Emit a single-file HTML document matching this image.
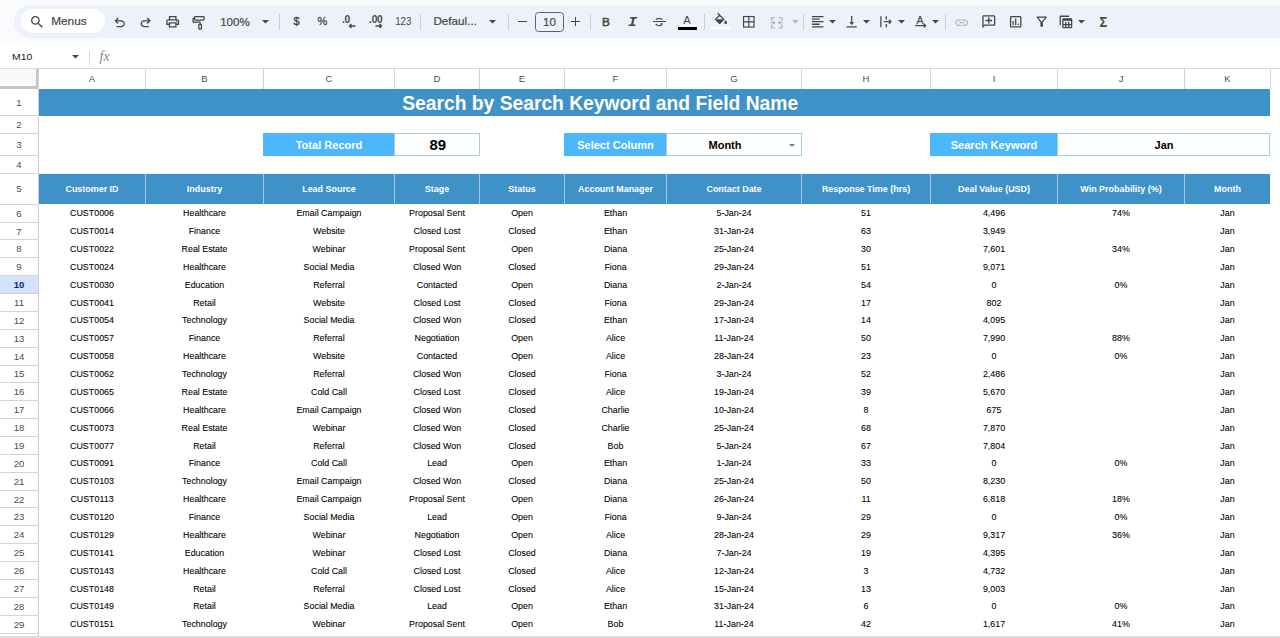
<!DOCTYPE html><html><head><meta charset="utf-8"><title>Search</title><style>html,body{margin:0;padding:0}
body{width:1280px;height:638px;overflow:hidden;position:relative;background:#fff;font-family:"Liberation Sans",sans-serif;}
body>div{position:absolute;box-sizing:border-box}
.topbg{left:0;top:0;width:1280px;height:44px;background:#f9fbfd}
.tb{left:13.5px;top:5.3px;width:1280px;height:32.4px;background:#edf2fa;border-radius:16.3px 0 0 16.3px}
.pill{left:20.8px;top:9.4px;width:84.2px;height:24px;border-radius:12px;background:#fff}
.fbar{left:0;top:44px;width:1280px;height:24.5px;background:#fff}
.ic{position:absolute;display:block;overflow:visible}
.sep{width:1px;background:#cbced4}
.tt{text-align:center;white-space:nowrap}
.fsbox{left:535px;top:12px;width:28.6px;height:19.6px;border:1px solid #60646a;border-radius:3.5px}

.colstrip{background:#fff;border-top:1px solid #d9d9d9;}
.corner{background:#f8f9fb;border-right:3px solid #c4c6c8;border-bottom:3px solid #c4c6c8;border-top:1px solid #d9d9d9}
.ch{border-left:1px solid #d4d4d4;font-size:9.5px;color:#4a4d51;text-align:center;line-height:19.4px}
.rh{font-size:9.6px;color:#4a4d51;text-align:center;display:flex;align-items:center;justify-content:center}
.rh.sel{color:#0b2a5c;font-weight:bold}
.selbg{background:#d3e3fd}
.rhbg{background:#fff}
.rline{background:#d4d4d4}
.rvline{background:#cfcfcf}
.band{background:#3e92c8}
.title{color:#fff;font-weight:bold;font-size:19.25px;display:flex;align-items:center;justify-content:center;white-space:nowrap}
.title span,.lab span,.val span{display:inline-block;position:relative;transform:scaleY(1.02)}
.lab{background:#4cb7fa;color:#fff;font-weight:bold;font-size:11.05px;display:flex;align-items:center;justify-content:center}
.val{background:#fff;border:1px solid #a6cde3;color:#000;font-weight:bold;font-size:11px;display:flex;align-items:center;justify-content:center}
.val.big{font-size:14.9px}
.dd{position:absolute;right:6.2px;top:9.5px;width:0;height:0;border-left:3.4px solid transparent;border-right:3.4px solid transparent;border-top:3.6px solid #7a7a7a}
.hd{transform:scaleY(1.02);color:#fff;font-weight:bold;font-size:8.95px;display:flex;align-items:center;justify-content:center;white-space:nowrap}
.hsep{background:#a9c9ea}
.c{transform:scaleY(1.02);font-size:8.9px;color:#000;-webkit-text-stroke:0.08px #000;display:flex;align-items:center;justify-content:center;white-space:nowrap}
.botline{background:#dcdcdc}
</style></head><body>
<div class="topbg"></div><div class="tb"></div><div class="pill"></div><div class="fbar"></div>
<svg class="ic" style="left:28.50px;top:13.80px" width="16.20" height="16.20" viewBox="0 0 24 24" preserveAspectRatio="none" fill="#444746"><g><path d="M15.5 14h-.79l-.28-.27C15.41 12.59 16 11.11 16 9.5 16 5.91 13.09 3 9.5 3S3 5.91 3 9.5 5.91 16 9.5 16c1.61 0 3.09-.59 4.23-1.57l.27.28v.79l5 4.99L20.49 19l-4.99-5zm-6 0C7.01 14 5 11.99 5 9.5S7.01 5 9.5 5 14 7.01 14 9.5 11.99 14 9.5 14z"/></g></svg>
<div class="tt" style="left:51.2px;top:11.1px;width:40px;height:20px;line-height:20px;font-size:11.8px;color:#444746;text-align:left;-webkit-text-stroke:0.2px #444746">Menus</div>
<svg class="ic" style="left:111.80px;top:14.90px" width="15.40" height="15.40" viewBox="0 0 24 24" preserveAspectRatio="none" fill="#444746"><g><path d="M7 19v-2h7.1q1.575 0 2.738-1T18 13.5q0-1.500-1.163-2.500T14.100 10H7.800l2.600 2.600L9 14 4 9l5-5 1.400 1.400L7.800 8H14.100q2.425 0 4.163 1.575T20 13.500q0 2.350-1.738 3.925T14.100 19Z"/></g></svg>
<svg class="ic" style="left:138.10px;top:14.90px" width="15.40" height="15.40" viewBox="0 0 24 24" preserveAspectRatio="none" fill="#444746"><g transform="translate(24,0) scale(-1,1)"><path d="M7 19v-2h7.1q1.575 0 2.738-1T18 13.5q0-1.500-1.163-2.500T14.100 10H7.800l2.600 2.600L9 14 4 9l5-5 1.400 1.400L7.800 8H14.100q2.425 0 4.163 1.575T20 13.500q0 2.350-1.738 3.925T14.100 19Z"/></g></svg>
<svg class="ic" style="left:165.10px;top:14.30px" width="15.40" height="15.40" viewBox="0 0 24 24" preserveAspectRatio="none" fill="#444746"><g><path d="M16 8V5H8v3H6V3h12v5ZM18 12.500q.425 0 .713-.288T19 11.500q0-.425-.288-.713T18 10.500q-.425 0-.713.288T17 11.500q0 .425.288.713T18 12.500ZM16 19v-4H8v4Zm2 2H6v-4H2v-6q0-1.275.875-2.138T5 8h14q1.275 0 2.138.863T22 11v6h-4Zm2-6v-4q0-.425-.288-.713T19 10H5q-.425 0-.713.288T4 11v4h2v-2h12v2Z"/></g></svg>
<svg class="ic" style="left:190.50px;top:14.90px" width="15.40" height="15.40" viewBox="0 0 24 24" preserveAspectRatio="none" fill="none"><g><g stroke="#444746" stroke-width="2" fill="none" stroke-linejoin="round"><rect x="5.500" y="2.500" width="15" height="5.500" rx="1.200"/><path d="M5.500 5.200H3.200v5.800h11v3.500"/><rect x="12.200" y="14.500" width="4" height="7.500" rx="1"/></g></g></svg>
<div class="tt" style="left:210.0px;width:50.0px;top:11.6px;height:20px;line-height:20px;font-size:11.6px;font-weight:normal;color:#444746;-webkit-text-stroke:0.2px #444746">100%</div>
<svg class="ic" style="left:261.70px;top:20.45px" width="7.0" height="3.5" viewBox="0 0 10 5" fill="#444746"><path d="M0 0h10L5 5z"/></svg>
<div class="sep" style="left:279.0px;top:13.5px;height:16.5px"></div>
<div class="tt" style="left:283.5px;width:26.0px;top:11.0px;height:20px;line-height:20px;font-size:11.0px;font-weight:normal;color:#444746;-webkit-text-stroke:0.35px #444746">$</div>
<div class="tt" style="left:308.0px;width:29.0px;top:11.2px;height:20px;line-height:20px;font-size:11.0px;font-weight:normal;color:#444746;-webkit-text-stroke:0.3px #444746">%</div>
<div class="tt" style="left:331.0px;width:30.0px;top:9.9px;height:20px;line-height:20px;font-size:10.2px;font-weight:bold;color:#444746;letter-spacing:-0.3px">.0</div>
<svg class="ic" style="left:348.30px;top:22.20px" width="8.00" height="8.00" viewBox="0 0 16 16" preserveAspectRatio="none" fill="none"><g><path d="M15 8H3M7 4L3 8l4 4" stroke="#444746" stroke-width="2.700" fill="none"/></g></svg>
<div class="tt" style="left:359.0px;width:33.5px;top:9.9px;height:20px;line-height:20px;font-size:10.2px;font-weight:bold;color:#444746;letter-spacing:-0.3px">.00</div>
<svg class="ic" style="left:374.80px;top:22.20px" width="8.00" height="8.00" viewBox="0 0 16 16" preserveAspectRatio="none" fill="none"><g><path d="M1 8h12M9 4l4 4-4 4" stroke="#444746" stroke-width="2.700" fill="none"/></g></svg>
<div class="tt" style="left:386.0px;width:34.5px;top:10.6px;height:20px;line-height:20px;font-size:11.0px;font-weight:normal;color:#444746;transform:scaleX(0.88)">123</div>
<div class="sep" style="left:419.5px;top:13.5px;height:16.5px"></div>
<div class="tt" style="left:433.4px;top:11px;width:60px;height:20px;line-height:20px;font-size:11.7px;color:#444746;text-align:left;-webkit-text-stroke:0.2px #444746">Defaul...</div>
<svg class="ic" style="left:489.00px;top:20.45px" width="7.0" height="3.5" viewBox="0 0 10 5" fill="#444746"><path d="M0 0h10L5 5z"/></svg>
<div class="sep" style="left:508.0px;top:13.5px;height:16.5px"></div>
<div class="bar" style="left:518px;top:20.7px;width:8.600px;height:1.400px;background:#444746"></div>
<div class="fsbox"></div>
<div class="tt" style="left:530.0px;width:39.0px;top:11.8px;height:20px;line-height:20px;font-size:11.6px;font-weight:normal;color:#444746;-webkit-text-stroke:0.2px #444746">10</div>
<div class="bar" style="left:571.400px;top:20.7px;width:8.800px;height:1.400px;background:#444746"></div>
<div class="bar" style="left:575.100px;top:17px;width:1.400px;height:8.800px;background:#444746"></div>
<div class="sep" style="left:590.0px;top:13.5px;height:16.5px"></div>
<div class="tt" style="left:592.0px;width:28.0px;top:11.6px;height:20px;line-height:20px;font-size:11.8px;font-weight:normal;color:#444746;-webkit-text-stroke:0.5px #444746">B</div>
<div class="tt" style="left:618.0px;width:29.0px;top:12.8px;height:20px;line-height:20px;font-size:13.2px;font-weight:bold;color:#444746;font-style:italic;font-family:'Liberation Mono',monospace;transform:scaleX(1.15)">I</div>
<div class="tt" style="left:644.0px;width:30.0px;top:11.6px;height:20px;line-height:20px;font-size:11.8px;font-weight:normal;color:#444746;-webkit-text-stroke:0.35px #444746">S</div>
<div class="bar" style="left:652.500px;top:21.200px;width:13.500px;height:1.300px;background:#444746;box-shadow:0 -1px 0 #edf2fa,0 1px 0 #edf2fa"></div>
<div class="tt" style="left:672.0px;width:30.0px;top:10.1px;height:20px;line-height:20px;font-size:11.2px;font-weight:normal;color:#444746;">A</div>
<div class="bar" style="left:677.500px;top:26.800px;width:19px;height:2.800px;background:#000"></div>
<div class="sep" style="left:704.0px;top:13.5px;height:16.5px"></div>
<svg class="ic" style="left:712.60px;top:12.30px" width="16.00" height="16.00" viewBox="0 -1 24 24" preserveAspectRatio="none" fill="#444746"><g><path d="M16.56 8.94L7.62 0 6.21 1.41l2.38 2.38-5.15 5.15c-.59.59-.59 1.54 0 2.12l5.5 5.5c.29.29.68.44 1.06.44s.77-.15 1.06-.44l5.5-5.5c.59-.58.59-1.53 0-2.12zM5.21 10L10 5.21 14.79 10H5.21zM19 11.5s-2 2.170-2 3.500c0 1.100.900 2 2 2s2-.900 2-2c0-1.330-2-3.500-2-3.500z"/></g></svg>
<div class="bar" style="left:711px;top:26.600px;width:19px;height:2.900px;background:#fff"></div>
<svg class="ic" style="left:741.20px;top:14.10px" width="15.60" height="15.60" viewBox="0 0 24 24" preserveAspectRatio="none" fill="none"><g><g stroke="#444746" stroke-width="1.800" fill="none"><rect x="3.900" y="3.900" width="16.200" height="16.200"/><path d="M12 4v16M4 12h16"/></g></g></svg>
<svg class="ic" style="left:769.10px;top:14.50px" width="15.40" height="15.40" viewBox="0 0 24 24" preserveAspectRatio="none" fill="none"><g><g stroke="#b4b7bb" stroke-width="2" fill="none"><path d="M9 4H4v5M4 15v5h5M15 4h5v5M20 15v5h-5"/><path d="M3 12h6M6.500 9.500L9 12l-2.500 2.500M21 12h-6M17.500 9.500L15 12l2.500 2.500"/></g></g></svg>
<svg class="ic" style="left:791.50px;top:20.45px" width="7.0" height="3.5" viewBox="0 0 10 5" fill="#b4b7bb"><path d="M0 0h10L5 5z"/></svg>
<div class="sep" style="left:802.5px;top:13.5px;height:16.5px"></div>
<svg class="ic" style="left:809.80px;top:14.30px" width="15.40" height="15.40" viewBox="0 0 24 24" preserveAspectRatio="none" fill="#444746"><g><path d="M15 15H3v2h12v-2zm0-8H3v2h12V7zM3 13h18v-2H3v2zm0 8h18v-2H3v2zM3 3v2h18V3H3z"/></g></svg>
<svg class="ic" style="left:829.20px;top:20.45px" width="7.0" height="3.5" viewBox="0 0 10 5" fill="#444746"><path d="M0 0h10L5 5z"/></svg>
<svg class="ic" style="left:844.00px;top:14.30px" width="15.40" height="15.40" viewBox="0 0 24 24" preserveAspectRatio="none" fill="#444746"><g><path d="M16 13h-3V3h-2v10H8l4 4 4-4zM4 19v2h16v-2H4z"/></g></svg>
<svg class="ic" style="left:863.20px;top:20.45px" width="7.0" height="3.5" viewBox="0 0 10 5" fill="#444746"><path d="M0 0h10L5 5z"/></svg>
<svg class="ic" style="left:877.80px;top:14.30px" width="15.40" height="15.40" viewBox="0 0 24 24" preserveAspectRatio="none" fill="none"><g><g stroke="#444746" stroke-width="2" fill="none"><path d="M4.500 3.500v17M13 3.500v5M13 15.500v5M9 12h11M17 8.700L20.300 12l-3.300 3.300"/></g></g></svg>
<svg class="ic" style="left:897.50px;top:20.45px" width="7.0" height="3.5" viewBox="0 0 10 5" fill="#444746"><path d="M0 0h10L5 5z"/></svg>
<div class="tt" style="left:905.0px;width:30.0px;top:9.5px;height:20px;line-height:20px;font-size:10.6px;font-weight:normal;color:#444746;-webkit-text-stroke:0.25px #444746">A</div>
<svg class="ic" style="left:914.70px;top:20.20px" width="11.40" height="11.40" viewBox="0 0 24 24" preserveAspectRatio="none" fill="none"><g><path d="M0.500 12h21M18.500 8l4 4-4 4" stroke="#444746" stroke-width="2.600" fill="none"/></g></svg>
<svg class="ic" style="left:932.00px;top:20.45px" width="7.0" height="3.5" viewBox="0 0 10 5" fill="#444746"><path d="M0 0h10L5 5z"/></svg>
<div class="sep" style="left:945.0px;top:13.5px;height:16.5px"></div>
<svg class="ic" style="left:953.70px;top:14.70px" width="15.40" height="15.40" viewBox="0 0 24 24" preserveAspectRatio="none" fill="#b4b7bb"><g><path d="M3.9 12c0-1.710 1.390-3.100 3.100-3.100h4V7H7c-2.760 0-5 2.240-5 5s2.240 5 5 5h4v-1.900H7c-1.710 0-3.100-1.390-3.100-3.100zM8 13h8v-2H8v2zm9-6h-4v1.900h4c1.710 0 3.100 1.390 3.100 3.100s-1.390 3.100-3.100 3.100h-4V17h4c2.760 0 5-2.240 5-5s-2.240-5-5-5z"/></g></svg>
<svg class="ic" style="left:980.80px;top:14.40px" width="15.60" height="15.60" viewBox="0 0 24 24" preserveAspectRatio="none" fill="#444746"><g transform="translate(24,0) scale(-1,1)"><path d="M22 4c0-1.100-.900-2-2-2H4c-1.100 0-2 .900-2 2v12c0 1.100.900 2 2 2h14l4 4V4zm-2 13.170L18.830 16H4V4h16v13.170zM13 5h-2v4H7v2h4v4h2v-4h4V9h-4z"/></g></svg>
<svg class="ic" style="left:1007.70px;top:14.30px" width="15.40" height="15.40" viewBox="0 0 24 24" preserveAspectRatio="none" fill="#444746"><g><path d="M9 17H7v-6h2v6zm4 0h-2V7h2v10zm4 0h-2v-2.200h2V17zm2 2H5V5h14v14zm0-16H5c-1.100 0-2 .900-2 2v14c0 1.100.900 2 2 2h14c1.100 0 2-.900 2-2V5c0-1.100-.900-2-2-2z"/></g></svg>
<svg class="ic" style="left:1033.70px;top:14.30px" width="15.40" height="15.40" viewBox="0 0 24 24" preserveAspectRatio="none" fill="#444746"><g><path d="M7 6h10l-5.010 6.300L7 6zm-2.750-.390C6.270 8.200 10 13 10 13v6c0 .550.450 1 1 1h2c.550 0 1-.450 1-1v-6s3.720-4.800 5.740-7.390c.510-.660.040-1.610-.790-1.610H5.040c-.830 0-1.300.950-.790 1.610z"/></g></svg>
<svg class="ic" style="left:1058.40px;top:14.00px" width="15.60" height="15.60" viewBox="0 0 24 24" preserveAspectRatio="none" fill="none"><g><g stroke="#444746" stroke-width="2" fill="none"><path d="M17 3.500H3.500v14"/><rect x="7.500" y="7.500" width="13.500" height="13.500" rx="1"/><path d="M7.500 9h13.500" stroke-width="3"/><path d="M7.500 16.400h13.500M12 12v9M16.500 12v9"/></g></g></svg>
<svg class="ic" style="left:1078.20px;top:20.45px" width="7.0" height="3.5" viewBox="0 0 10 5" fill="#444746"><path d="M0 0h10L5 5z"/></svg>
<div class="tt" style="left:1089.0px;width:29.0px;top:11.9px;height:20px;line-height:20px;font-size:14.4px;font-weight:bold;color:#444746;transform:scaleX(0.9)">Σ</div>
<div class="tt" style="left:12px;top:47.300px;width:40px;height:20px;line-height:20px;font-size:10.4px;color:#202124;text-align:left;transform:scaleY(0.94)">M10</div>
<svg class="ic" style="left:71.90px;top:55.45px" width="7.0" height="3.5" viewBox="0 0 10 5" fill="#444746"><path d="M0 0h10L5 5z"/></svg>
<div class="sep" style="left:88.700px;top:51px;height:13.500px;background:#d5d8dc"></div>
<div class="tt" style="left:99.6px;top:46.800px;width:18px;height:20px;line-height:20px;font-size:13.6px;color:#80868b;text-align:left;font-style:italic;font-family:'Liberation Serif',serif;letter-spacing:0.2px">fx</div>
<div class="colstrip" style="left:0.0px;top:68.0px;width:1280.0px;height:21.0px;"></div>
<div class="corner" style="left:0.0px;top:68.0px;width:39.0px;height:21.0px;"></div>
<div class="ch" style="left:38.0px;top:69.0px;width:107.0px;height:20.0px;">A</div>
<div class="ch" style="left:145.0px;top:69.0px;width:118.0px;height:20.0px;">B</div>
<div class="ch" style="left:263.0px;top:69.0px;width:131.0px;height:20.0px;">C</div>
<div class="ch" style="left:394.0px;top:69.0px;width:85.0px;height:20.0px;">D</div>
<div class="ch" style="left:479.0px;top:69.0px;width:85.0px;height:20.0px;">E</div>
<div class="ch" style="left:564.0px;top:69.0px;width:102.0px;height:20.0px;">F</div>
<div class="ch" style="left:666.0px;top:69.0px;width:135.0px;height:20.0px;">G</div>
<div class="ch" style="left:801.0px;top:69.0px;width:129.0px;height:20.0px;">H</div>
<div class="ch" style="left:930.0px;top:69.0px;width:127.0px;height:20.0px;">I</div>
<div class="ch" style="left:1057.0px;top:69.0px;width:127.0px;height:20.0px;">J</div>
<div class="ch" style="left:1184.0px;top:69.0px;width:86.0px;height:20.0px;">K</div>
<div class="ch" style="left:1270.0px;top:69.0px;width:10.0px;height:20.0px;"></div>
<div class="rhbg" style="left:0.0px;top:89.0px;width:39.0px;height:549.0px;"></div>
<div class="rh" style="left:0.0px;top:89.0px;width:38.0px;height:26.8px;">1</div>
<div class="rh" style="left:0.0px;top:115.8px;width:38.0px;height:17.8px;">2</div>
<div class="rline" style="left:0.0px;top:115.0px;width:38.0px;height:1.0px;"></div>
<div class="rh" style="left:0.0px;top:133.6px;width:38.0px;height:22.1px;">3</div>
<div class="rline" style="left:0.0px;top:133.0px;width:38.0px;height:1.0px;"></div>
<div class="rh" style="left:0.0px;top:155.7px;width:38.0px;height:18.1px;">4</div>
<div class="rline" style="left:0.0px;top:155.0px;width:38.0px;height:1.0px;"></div>
<div class="rh" style="left:0.0px;top:173.8px;width:38.0px;height:30.4px;">5</div>
<div class="rline" style="left:0.0px;top:173.0px;width:38.0px;height:1.0px;"></div>
<div class="rh" style="left:0.0px;top:204.2px;width:38.0px;height:17.9px;">6</div>
<div class="rline" style="left:0.0px;top:204.0px;width:38.0px;height:1.0px;"></div>
<div class="rh" style="left:0.0px;top:222.1px;width:38.0px;height:17.9px;">7</div>
<div class="rline" style="left:0.0px;top:222.0px;width:38.0px;height:1.0px;"></div>
<div class="rh" style="left:0.0px;top:239.9px;width:38.0px;height:17.9px;">8</div>
<div class="rline" style="left:0.0px;top:239.0px;width:38.0px;height:1.0px;"></div>
<div class="rh" style="left:0.0px;top:257.8px;width:38.0px;height:17.9px;">9</div>
<div class="rline" style="left:0.0px;top:257.0px;width:38.0px;height:1.0px;"></div>
<div class="selbg" style="left:0.0px;top:275.0px;width:38.0px;height:18.0px;"></div>
<div class="rh sel" style="left:0.0px;top:275.7px;width:38.0px;height:17.9px;">10</div>
<div class="rline" style="left:0.0px;top:275.0px;width:38.0px;height:1.0px;"></div>
<div class="rh" style="left:0.0px;top:293.6px;width:38.0px;height:17.9px;">11</div>
<div class="rline" style="left:0.0px;top:293.0px;width:38.0px;height:1.0px;"></div>
<div class="rh" style="left:0.0px;top:311.4px;width:38.0px;height:17.9px;">12</div>
<div class="rline" style="left:0.0px;top:311.0px;width:38.0px;height:1.0px;"></div>
<div class="rh" style="left:0.0px;top:329.3px;width:38.0px;height:17.9px;">13</div>
<div class="rline" style="left:0.0px;top:329.0px;width:38.0px;height:1.0px;"></div>
<div class="rh" style="left:0.0px;top:347.2px;width:38.0px;height:17.9px;">14</div>
<div class="rline" style="left:0.0px;top:347.0px;width:38.0px;height:1.0px;"></div>
<div class="rh" style="left:0.0px;top:365.0px;width:38.0px;height:17.9px;">15</div>
<div class="rline" style="left:0.0px;top:365.0px;width:38.0px;height:1.0px;"></div>
<div class="rh" style="left:0.0px;top:382.9px;width:38.0px;height:17.9px;">16</div>
<div class="rline" style="left:0.0px;top:382.0px;width:38.0px;height:1.0px;"></div>
<div class="rh" style="left:0.0px;top:400.8px;width:38.0px;height:17.9px;">17</div>
<div class="rline" style="left:0.0px;top:400.0px;width:38.0px;height:1.0px;"></div>
<div class="rh" style="left:0.0px;top:418.6px;width:38.0px;height:17.9px;">18</div>
<div class="rline" style="left:0.0px;top:418.0px;width:38.0px;height:1.0px;"></div>
<div class="rh" style="left:0.0px;top:436.5px;width:38.0px;height:17.9px;">19</div>
<div class="rline" style="left:0.0px;top:436.0px;width:38.0px;height:1.0px;"></div>
<div class="rh" style="left:0.0px;top:454.4px;width:38.0px;height:17.9px;">20</div>
<div class="rline" style="left:0.0px;top:454.0px;width:38.0px;height:1.0px;"></div>
<div class="rh" style="left:0.0px;top:472.2px;width:38.0px;height:17.9px;">21</div>
<div class="rline" style="left:0.0px;top:472.0px;width:38.0px;height:1.0px;"></div>
<div class="rh" style="left:0.0px;top:490.1px;width:38.0px;height:17.9px;">22</div>
<div class="rline" style="left:0.0px;top:490.0px;width:38.0px;height:1.0px;"></div>
<div class="rh" style="left:0.0px;top:508.0px;width:38.0px;height:17.9px;">23</div>
<div class="rline" style="left:0.0px;top:507.0px;width:38.0px;height:1.0px;"></div>
<div class="rh" style="left:0.0px;top:525.9px;width:38.0px;height:17.9px;">24</div>
<div class="rline" style="left:0.0px;top:525.0px;width:38.0px;height:1.0px;"></div>
<div class="rh" style="left:0.0px;top:543.7px;width:38.0px;height:17.9px;">25</div>
<div class="rline" style="left:0.0px;top:543.0px;width:38.0px;height:1.0px;"></div>
<div class="rh" style="left:0.0px;top:561.6px;width:38.0px;height:17.9px;">26</div>
<div class="rline" style="left:0.0px;top:561.0px;width:38.0px;height:1.0px;"></div>
<div class="rh" style="left:0.0px;top:579.5px;width:38.0px;height:17.9px;">27</div>
<div class="rline" style="left:0.0px;top:579.0px;width:38.0px;height:1.0px;"></div>
<div class="rh" style="left:0.0px;top:597.3px;width:38.0px;height:17.9px;">28</div>
<div class="rline" style="left:0.0px;top:597.0px;width:38.0px;height:1.0px;"></div>
<div class="rh" style="left:0.0px;top:615.2px;width:38.0px;height:17.9px;">29</div>
<div class="rline" style="left:0.0px;top:615.0px;width:38.0px;height:1.0px;"></div>
<div class="rh" style="left:0.0px;top:633.1px;width:38.0px;height:17.9px;">30</div>
<div class="rline" style="left:0.0px;top:633.0px;width:38.0px;height:1.0px;"></div>
<div class="rvline" style="left:38.0px;top:89.0px;width:1.0px;height:549.0px;"></div>
<div class="band" style="left:39.0px;top:89.0px;width:1231.0px;height:27.0px;"></div>
<div class="title" style="left:350.2px;top:90.6px;width:500.0px;height:26.7px;"><span>Search by Search Keyword and Field Name</span></div>
<div class="lab" style="left:263.0px;top:133.0px;width:132.0px;height:23.0px;"><span>Total Record</span></div>
<div class="val big" style="left:394.0px;top:133.0px;width:86.0px;height:23.0px;"><span style="left:0.7px;top:0.5px">89</span></div>
<div class="lab" style="left:564.0px;top:133.0px;width:103.0px;height:23.0px;"><span>Select Column</span></div>
<div class="val" style="left:666.0px;top:133.0px;width:136.0px;height:23.0px;"><span style="left:-9px">Month</span><i class="dd"></i></div>
<div class="lab" style="left:930.0px;top:133.0px;width:128.0px;height:23.0px;"><span>Search Keyword</span></div>
<div class="val" style="left:1057.0px;top:133.0px;width:213.0px;height:23.0px;"><span style="left:0.5px">Jan</span></div>
<div class="band" style="left:39.0px;top:174.0px;width:1231.0px;height:30.0px;"></div>
<div class="hd" style="left:39.0px;top:174.0px;width:106.0px;height:30.0px;">Customer ID</div>
<div class="hd" style="left:146.0px;top:174.0px;width:117.0px;height:30.0px;">Industry</div>
<div class="hsep" style="left:145.0px;top:174.0px;width:1.0px;height:30.0px;"></div>
<div class="hd" style="left:264.0px;top:174.0px;width:130.0px;height:30.0px;">Lead Source</div>
<div class="hsep" style="left:263.0px;top:174.0px;width:1.0px;height:30.0px;"></div>
<div class="hd" style="left:395.0px;top:174.0px;width:84.0px;height:30.0px;">Stage</div>
<div class="hsep" style="left:394.0px;top:174.0px;width:1.0px;height:30.0px;"></div>
<div class="hd" style="left:480.0px;top:174.0px;width:84.0px;height:30.0px;">Status</div>
<div class="hsep" style="left:479.0px;top:174.0px;width:1.0px;height:30.0px;"></div>
<div class="hd" style="left:565.0px;top:174.0px;width:101.0px;height:30.0px;">Account Manager</div>
<div class="hsep" style="left:564.0px;top:174.0px;width:1.0px;height:30.0px;"></div>
<div class="hd" style="left:667.0px;top:174.0px;width:134.0px;height:30.0px;">Contact Date</div>
<div class="hsep" style="left:666.0px;top:174.0px;width:1.0px;height:30.0px;"></div>
<div class="hd" style="left:802.0px;top:174.0px;width:128.0px;height:30.0px;">Response Time (hrs)</div>
<div class="hsep" style="left:801.0px;top:174.0px;width:1.0px;height:30.0px;"></div>
<div class="hd" style="left:931.0px;top:174.0px;width:126.0px;height:30.0px;">Deal Value (USD)</div>
<div class="hsep" style="left:930.0px;top:174.0px;width:1.0px;height:30.0px;"></div>
<div class="hd" style="left:1058.0px;top:174.0px;width:126.0px;height:30.0px;">Win Probability (%)</div>
<div class="hsep" style="left:1057.0px;top:174.0px;width:1.0px;height:30.0px;"></div>
<div class="hd" style="left:1185.0px;top:174.0px;width:85.0px;height:30.0px;">Month</div>
<div class="hsep" style="left:1184.0px;top:174.0px;width:1.0px;height:30.0px;"></div>
<div class="c" style="left:39.0px;top:204.2px;width:106.0px;height:17.9px;">CUST0006</div>
<div class="c" style="left:146.0px;top:204.2px;width:117.0px;height:17.9px;">Healthcare</div>
<div class="c" style="left:264.0px;top:204.2px;width:130.0px;height:17.9px;">Email Campaign</div>
<div class="c" style="left:395.0px;top:204.2px;width:84.0px;height:17.9px;">Proposal Sent</div>
<div class="c" style="left:480.0px;top:204.2px;width:84.0px;height:17.9px;">Open</div>
<div class="c" style="left:565.0px;top:204.2px;width:101.0px;height:17.9px;">Ethan</div>
<div class="c" style="left:667.0px;top:204.2px;width:134.0px;height:17.9px;">5-Jan-24</div>
<div class="c" style="left:802.0px;top:204.2px;width:128.0px;height:17.9px;">51</div>
<div class="c" style="left:931.0px;top:204.2px;width:126.0px;height:17.9px;">4,496</div>
<div class="c" style="left:1058.0px;top:204.2px;width:126.0px;height:17.9px;">74%</div>
<div class="c" style="left:1185.0px;top:204.2px;width:85.0px;height:17.9px;">Jan</div>
<div class="c" style="left:39.0px;top:222.1px;width:106.0px;height:17.9px;">CUST0014</div>
<div class="c" style="left:146.0px;top:222.1px;width:117.0px;height:17.9px;">Finance</div>
<div class="c" style="left:264.0px;top:222.1px;width:130.0px;height:17.9px;">Website</div>
<div class="c" style="left:395.0px;top:222.1px;width:84.0px;height:17.9px;">Closed Lost</div>
<div class="c" style="left:480.0px;top:222.1px;width:84.0px;height:17.9px;">Closed</div>
<div class="c" style="left:565.0px;top:222.1px;width:101.0px;height:17.9px;">Ethan</div>
<div class="c" style="left:667.0px;top:222.1px;width:134.0px;height:17.9px;">31-Jan-24</div>
<div class="c" style="left:802.0px;top:222.1px;width:128.0px;height:17.9px;">63</div>
<div class="c" style="left:931.0px;top:222.1px;width:126.0px;height:17.9px;">3,949</div>
<div class="c" style="left:1185.0px;top:222.1px;width:85.0px;height:17.9px;">Jan</div>
<div class="c" style="left:39.0px;top:239.9px;width:106.0px;height:17.9px;">CUST0022</div>
<div class="c" style="left:146.0px;top:239.9px;width:117.0px;height:17.9px;">Real Estate</div>
<div class="c" style="left:264.0px;top:239.9px;width:130.0px;height:17.9px;">Webinar</div>
<div class="c" style="left:395.0px;top:239.9px;width:84.0px;height:17.9px;">Proposal Sent</div>
<div class="c" style="left:480.0px;top:239.9px;width:84.0px;height:17.9px;">Open</div>
<div class="c" style="left:565.0px;top:239.9px;width:101.0px;height:17.9px;">Diana</div>
<div class="c" style="left:667.0px;top:239.9px;width:134.0px;height:17.9px;">25-Jan-24</div>
<div class="c" style="left:802.0px;top:239.9px;width:128.0px;height:17.9px;">30</div>
<div class="c" style="left:931.0px;top:239.9px;width:126.0px;height:17.9px;">7,601</div>
<div class="c" style="left:1058.0px;top:239.9px;width:126.0px;height:17.9px;">34%</div>
<div class="c" style="left:1185.0px;top:239.9px;width:85.0px;height:17.9px;">Jan</div>
<div class="c" style="left:39.0px;top:257.8px;width:106.0px;height:17.9px;">CUST0024</div>
<div class="c" style="left:146.0px;top:257.8px;width:117.0px;height:17.9px;">Healthcare</div>
<div class="c" style="left:264.0px;top:257.8px;width:130.0px;height:17.9px;">Social Media</div>
<div class="c" style="left:395.0px;top:257.8px;width:84.0px;height:17.9px;">Closed Won</div>
<div class="c" style="left:480.0px;top:257.8px;width:84.0px;height:17.9px;">Closed</div>
<div class="c" style="left:565.0px;top:257.8px;width:101.0px;height:17.9px;">Fiona</div>
<div class="c" style="left:667.0px;top:257.8px;width:134.0px;height:17.9px;">29-Jan-24</div>
<div class="c" style="left:802.0px;top:257.8px;width:128.0px;height:17.9px;">51</div>
<div class="c" style="left:931.0px;top:257.8px;width:126.0px;height:17.9px;">9,071</div>
<div class="c" style="left:1185.0px;top:257.8px;width:85.0px;height:17.9px;">Jan</div>
<div class="c" style="left:39.0px;top:275.7px;width:106.0px;height:17.9px;">CUST0030</div>
<div class="c" style="left:146.0px;top:275.7px;width:117.0px;height:17.9px;">Education</div>
<div class="c" style="left:264.0px;top:275.7px;width:130.0px;height:17.9px;">Referral</div>
<div class="c" style="left:395.0px;top:275.7px;width:84.0px;height:17.9px;">Contacted</div>
<div class="c" style="left:480.0px;top:275.7px;width:84.0px;height:17.9px;">Open</div>
<div class="c" style="left:565.0px;top:275.7px;width:101.0px;height:17.9px;">Diana</div>
<div class="c" style="left:667.0px;top:275.7px;width:134.0px;height:17.9px;">2-Jan-24</div>
<div class="c" style="left:802.0px;top:275.7px;width:128.0px;height:17.9px;">54</div>
<div class="c" style="left:931.0px;top:275.7px;width:126.0px;height:17.9px;">0</div>
<div class="c" style="left:1058.0px;top:275.7px;width:126.0px;height:17.9px;">0%</div>
<div class="c" style="left:1185.0px;top:275.7px;width:85.0px;height:17.9px;">Jan</div>
<div class="c" style="left:39.0px;top:293.6px;width:106.0px;height:17.9px;">CUST0041</div>
<div class="c" style="left:146.0px;top:293.6px;width:117.0px;height:17.9px;">Retail</div>
<div class="c" style="left:264.0px;top:293.6px;width:130.0px;height:17.9px;">Website</div>
<div class="c" style="left:395.0px;top:293.6px;width:84.0px;height:17.9px;">Closed Lost</div>
<div class="c" style="left:480.0px;top:293.6px;width:84.0px;height:17.9px;">Closed</div>
<div class="c" style="left:565.0px;top:293.6px;width:101.0px;height:17.9px;">Fiona</div>
<div class="c" style="left:667.0px;top:293.6px;width:134.0px;height:17.9px;">29-Jan-24</div>
<div class="c" style="left:802.0px;top:293.6px;width:128.0px;height:17.9px;">17</div>
<div class="c" style="left:931.0px;top:293.6px;width:126.0px;height:17.9px;">802</div>
<div class="c" style="left:1185.0px;top:293.6px;width:85.0px;height:17.9px;">Jan</div>
<div class="c" style="left:39.0px;top:311.4px;width:106.0px;height:17.9px;">CUST0054</div>
<div class="c" style="left:146.0px;top:311.4px;width:117.0px;height:17.9px;">Technology</div>
<div class="c" style="left:264.0px;top:311.4px;width:130.0px;height:17.9px;">Social Media</div>
<div class="c" style="left:395.0px;top:311.4px;width:84.0px;height:17.9px;">Closed Won</div>
<div class="c" style="left:480.0px;top:311.4px;width:84.0px;height:17.9px;">Closed</div>
<div class="c" style="left:565.0px;top:311.4px;width:101.0px;height:17.9px;">Ethan</div>
<div class="c" style="left:667.0px;top:311.4px;width:134.0px;height:17.9px;">17-Jan-24</div>
<div class="c" style="left:802.0px;top:311.4px;width:128.0px;height:17.9px;">14</div>
<div class="c" style="left:931.0px;top:311.4px;width:126.0px;height:17.9px;">4,095</div>
<div class="c" style="left:1185.0px;top:311.4px;width:85.0px;height:17.9px;">Jan</div>
<div class="c" style="left:39.0px;top:329.3px;width:106.0px;height:17.9px;">CUST0057</div>
<div class="c" style="left:146.0px;top:329.3px;width:117.0px;height:17.9px;">Finance</div>
<div class="c" style="left:264.0px;top:329.3px;width:130.0px;height:17.9px;">Referral</div>
<div class="c" style="left:395.0px;top:329.3px;width:84.0px;height:17.9px;">Negotiation</div>
<div class="c" style="left:480.0px;top:329.3px;width:84.0px;height:17.9px;">Open</div>
<div class="c" style="left:565.0px;top:329.3px;width:101.0px;height:17.9px;">Alice</div>
<div class="c" style="left:667.0px;top:329.3px;width:134.0px;height:17.9px;">11-Jan-24</div>
<div class="c" style="left:802.0px;top:329.3px;width:128.0px;height:17.9px;">50</div>
<div class="c" style="left:931.0px;top:329.3px;width:126.0px;height:17.9px;">7,990</div>
<div class="c" style="left:1058.0px;top:329.3px;width:126.0px;height:17.9px;">88%</div>
<div class="c" style="left:1185.0px;top:329.3px;width:85.0px;height:17.9px;">Jan</div>
<div class="c" style="left:39.0px;top:347.2px;width:106.0px;height:17.9px;">CUST0058</div>
<div class="c" style="left:146.0px;top:347.2px;width:117.0px;height:17.9px;">Healthcare</div>
<div class="c" style="left:264.0px;top:347.2px;width:130.0px;height:17.9px;">Website</div>
<div class="c" style="left:395.0px;top:347.2px;width:84.0px;height:17.9px;">Contacted</div>
<div class="c" style="left:480.0px;top:347.2px;width:84.0px;height:17.9px;">Open</div>
<div class="c" style="left:565.0px;top:347.2px;width:101.0px;height:17.9px;">Alice</div>
<div class="c" style="left:667.0px;top:347.2px;width:134.0px;height:17.9px;">28-Jan-24</div>
<div class="c" style="left:802.0px;top:347.2px;width:128.0px;height:17.9px;">23</div>
<div class="c" style="left:931.0px;top:347.2px;width:126.0px;height:17.9px;">0</div>
<div class="c" style="left:1058.0px;top:347.2px;width:126.0px;height:17.9px;">0%</div>
<div class="c" style="left:1185.0px;top:347.2px;width:85.0px;height:17.9px;">Jan</div>
<div class="c" style="left:39.0px;top:365.0px;width:106.0px;height:17.9px;">CUST0062</div>
<div class="c" style="left:146.0px;top:365.0px;width:117.0px;height:17.9px;">Technology</div>
<div class="c" style="left:264.0px;top:365.0px;width:130.0px;height:17.9px;">Referral</div>
<div class="c" style="left:395.0px;top:365.0px;width:84.0px;height:17.9px;">Closed Won</div>
<div class="c" style="left:480.0px;top:365.0px;width:84.0px;height:17.9px;">Closed</div>
<div class="c" style="left:565.0px;top:365.0px;width:101.0px;height:17.9px;">Fiona</div>
<div class="c" style="left:667.0px;top:365.0px;width:134.0px;height:17.9px;">3-Jan-24</div>
<div class="c" style="left:802.0px;top:365.0px;width:128.0px;height:17.9px;">52</div>
<div class="c" style="left:931.0px;top:365.0px;width:126.0px;height:17.9px;">2,486</div>
<div class="c" style="left:1185.0px;top:365.0px;width:85.0px;height:17.9px;">Jan</div>
<div class="c" style="left:39.0px;top:382.9px;width:106.0px;height:17.9px;">CUST0065</div>
<div class="c" style="left:146.0px;top:382.9px;width:117.0px;height:17.9px;">Real Estate</div>
<div class="c" style="left:264.0px;top:382.9px;width:130.0px;height:17.9px;">Cold Call</div>
<div class="c" style="left:395.0px;top:382.9px;width:84.0px;height:17.9px;">Closed Lost</div>
<div class="c" style="left:480.0px;top:382.9px;width:84.0px;height:17.9px;">Closed</div>
<div class="c" style="left:565.0px;top:382.9px;width:101.0px;height:17.9px;">Alice</div>
<div class="c" style="left:667.0px;top:382.9px;width:134.0px;height:17.9px;">19-Jan-24</div>
<div class="c" style="left:802.0px;top:382.9px;width:128.0px;height:17.9px;">39</div>
<div class="c" style="left:931.0px;top:382.9px;width:126.0px;height:17.9px;">5,670</div>
<div class="c" style="left:1185.0px;top:382.9px;width:85.0px;height:17.9px;">Jan</div>
<div class="c" style="left:39.0px;top:400.8px;width:106.0px;height:17.9px;">CUST0066</div>
<div class="c" style="left:146.0px;top:400.8px;width:117.0px;height:17.9px;">Healthcare</div>
<div class="c" style="left:264.0px;top:400.8px;width:130.0px;height:17.9px;">Email Campaign</div>
<div class="c" style="left:395.0px;top:400.8px;width:84.0px;height:17.9px;">Closed Won</div>
<div class="c" style="left:480.0px;top:400.8px;width:84.0px;height:17.9px;">Closed</div>
<div class="c" style="left:565.0px;top:400.8px;width:101.0px;height:17.9px;">Charlie</div>
<div class="c" style="left:667.0px;top:400.8px;width:134.0px;height:17.9px;">10-Jan-24</div>
<div class="c" style="left:802.0px;top:400.8px;width:128.0px;height:17.9px;">8</div>
<div class="c" style="left:931.0px;top:400.8px;width:126.0px;height:17.9px;">675</div>
<div class="c" style="left:1185.0px;top:400.8px;width:85.0px;height:17.9px;">Jan</div>
<div class="c" style="left:39.0px;top:418.6px;width:106.0px;height:17.9px;">CUST0073</div>
<div class="c" style="left:146.0px;top:418.6px;width:117.0px;height:17.9px;">Real Estate</div>
<div class="c" style="left:264.0px;top:418.6px;width:130.0px;height:17.9px;">Webinar</div>
<div class="c" style="left:395.0px;top:418.6px;width:84.0px;height:17.9px;">Closed Won</div>
<div class="c" style="left:480.0px;top:418.6px;width:84.0px;height:17.9px;">Closed</div>
<div class="c" style="left:565.0px;top:418.6px;width:101.0px;height:17.9px;">Charlie</div>
<div class="c" style="left:667.0px;top:418.6px;width:134.0px;height:17.9px;">25-Jan-24</div>
<div class="c" style="left:802.0px;top:418.6px;width:128.0px;height:17.9px;">68</div>
<div class="c" style="left:931.0px;top:418.6px;width:126.0px;height:17.9px;">7,870</div>
<div class="c" style="left:1185.0px;top:418.6px;width:85.0px;height:17.9px;">Jan</div>
<div class="c" style="left:39.0px;top:436.5px;width:106.0px;height:17.9px;">CUST0077</div>
<div class="c" style="left:146.0px;top:436.5px;width:117.0px;height:17.9px;">Retail</div>
<div class="c" style="left:264.0px;top:436.5px;width:130.0px;height:17.9px;">Referral</div>
<div class="c" style="left:395.0px;top:436.5px;width:84.0px;height:17.9px;">Closed Won</div>
<div class="c" style="left:480.0px;top:436.5px;width:84.0px;height:17.9px;">Closed</div>
<div class="c" style="left:565.0px;top:436.5px;width:101.0px;height:17.9px;">Bob</div>
<div class="c" style="left:667.0px;top:436.5px;width:134.0px;height:17.9px;">5-Jan-24</div>
<div class="c" style="left:802.0px;top:436.5px;width:128.0px;height:17.9px;">67</div>
<div class="c" style="left:931.0px;top:436.5px;width:126.0px;height:17.9px;">7,804</div>
<div class="c" style="left:1185.0px;top:436.5px;width:85.0px;height:17.9px;">Jan</div>
<div class="c" style="left:39.0px;top:454.4px;width:106.0px;height:17.9px;">CUST0091</div>
<div class="c" style="left:146.0px;top:454.4px;width:117.0px;height:17.9px;">Finance</div>
<div class="c" style="left:264.0px;top:454.4px;width:130.0px;height:17.9px;">Cold Call</div>
<div class="c" style="left:395.0px;top:454.4px;width:84.0px;height:17.9px;">Lead</div>
<div class="c" style="left:480.0px;top:454.4px;width:84.0px;height:17.9px;">Open</div>
<div class="c" style="left:565.0px;top:454.4px;width:101.0px;height:17.9px;">Ethan</div>
<div class="c" style="left:667.0px;top:454.4px;width:134.0px;height:17.9px;">1-Jan-24</div>
<div class="c" style="left:802.0px;top:454.4px;width:128.0px;height:17.9px;">33</div>
<div class="c" style="left:931.0px;top:454.4px;width:126.0px;height:17.9px;">0</div>
<div class="c" style="left:1058.0px;top:454.4px;width:126.0px;height:17.9px;">0%</div>
<div class="c" style="left:1185.0px;top:454.4px;width:85.0px;height:17.9px;">Jan</div>
<div class="c" style="left:39.0px;top:472.2px;width:106.0px;height:17.9px;">CUST0103</div>
<div class="c" style="left:146.0px;top:472.2px;width:117.0px;height:17.9px;">Technology</div>
<div class="c" style="left:264.0px;top:472.2px;width:130.0px;height:17.9px;">Email Campaign</div>
<div class="c" style="left:395.0px;top:472.2px;width:84.0px;height:17.9px;">Closed Won</div>
<div class="c" style="left:480.0px;top:472.2px;width:84.0px;height:17.9px;">Closed</div>
<div class="c" style="left:565.0px;top:472.2px;width:101.0px;height:17.9px;">Diana</div>
<div class="c" style="left:667.0px;top:472.2px;width:134.0px;height:17.9px;">25-Jan-24</div>
<div class="c" style="left:802.0px;top:472.2px;width:128.0px;height:17.9px;">50</div>
<div class="c" style="left:931.0px;top:472.2px;width:126.0px;height:17.9px;">8,230</div>
<div class="c" style="left:1185.0px;top:472.2px;width:85.0px;height:17.9px;">Jan</div>
<div class="c" style="left:39.0px;top:490.1px;width:106.0px;height:17.9px;">CUST0113</div>
<div class="c" style="left:146.0px;top:490.1px;width:117.0px;height:17.9px;">Healthcare</div>
<div class="c" style="left:264.0px;top:490.1px;width:130.0px;height:17.9px;">Email Campaign</div>
<div class="c" style="left:395.0px;top:490.1px;width:84.0px;height:17.9px;">Proposal Sent</div>
<div class="c" style="left:480.0px;top:490.1px;width:84.0px;height:17.9px;">Open</div>
<div class="c" style="left:565.0px;top:490.1px;width:101.0px;height:17.9px;">Diana</div>
<div class="c" style="left:667.0px;top:490.1px;width:134.0px;height:17.9px;">26-Jan-24</div>
<div class="c" style="left:802.0px;top:490.1px;width:128.0px;height:17.9px;">11</div>
<div class="c" style="left:931.0px;top:490.1px;width:126.0px;height:17.9px;">6,818</div>
<div class="c" style="left:1058.0px;top:490.1px;width:126.0px;height:17.9px;">18%</div>
<div class="c" style="left:1185.0px;top:490.1px;width:85.0px;height:17.9px;">Jan</div>
<div class="c" style="left:39.0px;top:508.0px;width:106.0px;height:17.9px;">CUST0120</div>
<div class="c" style="left:146.0px;top:508.0px;width:117.0px;height:17.9px;">Finance</div>
<div class="c" style="left:264.0px;top:508.0px;width:130.0px;height:17.9px;">Social Media</div>
<div class="c" style="left:395.0px;top:508.0px;width:84.0px;height:17.9px;">Lead</div>
<div class="c" style="left:480.0px;top:508.0px;width:84.0px;height:17.9px;">Open</div>
<div class="c" style="left:565.0px;top:508.0px;width:101.0px;height:17.9px;">Fiona</div>
<div class="c" style="left:667.0px;top:508.0px;width:134.0px;height:17.9px;">9-Jan-24</div>
<div class="c" style="left:802.0px;top:508.0px;width:128.0px;height:17.9px;">29</div>
<div class="c" style="left:931.0px;top:508.0px;width:126.0px;height:17.9px;">0</div>
<div class="c" style="left:1058.0px;top:508.0px;width:126.0px;height:17.9px;">0%</div>
<div class="c" style="left:1185.0px;top:508.0px;width:85.0px;height:17.9px;">Jan</div>
<div class="c" style="left:39.0px;top:525.9px;width:106.0px;height:17.9px;">CUST0129</div>
<div class="c" style="left:146.0px;top:525.9px;width:117.0px;height:17.9px;">Healthcare</div>
<div class="c" style="left:264.0px;top:525.9px;width:130.0px;height:17.9px;">Webinar</div>
<div class="c" style="left:395.0px;top:525.9px;width:84.0px;height:17.9px;">Negotiation</div>
<div class="c" style="left:480.0px;top:525.9px;width:84.0px;height:17.9px;">Open</div>
<div class="c" style="left:565.0px;top:525.9px;width:101.0px;height:17.9px;">Alice</div>
<div class="c" style="left:667.0px;top:525.9px;width:134.0px;height:17.9px;">28-Jan-24</div>
<div class="c" style="left:802.0px;top:525.9px;width:128.0px;height:17.9px;">29</div>
<div class="c" style="left:931.0px;top:525.9px;width:126.0px;height:17.9px;">9,317</div>
<div class="c" style="left:1058.0px;top:525.9px;width:126.0px;height:17.9px;">36%</div>
<div class="c" style="left:1185.0px;top:525.9px;width:85.0px;height:17.9px;">Jan</div>
<div class="c" style="left:39.0px;top:543.7px;width:106.0px;height:17.9px;">CUST0141</div>
<div class="c" style="left:146.0px;top:543.7px;width:117.0px;height:17.9px;">Education</div>
<div class="c" style="left:264.0px;top:543.7px;width:130.0px;height:17.9px;">Webinar</div>
<div class="c" style="left:395.0px;top:543.7px;width:84.0px;height:17.9px;">Closed Lost</div>
<div class="c" style="left:480.0px;top:543.7px;width:84.0px;height:17.9px;">Closed</div>
<div class="c" style="left:565.0px;top:543.7px;width:101.0px;height:17.9px;">Diana</div>
<div class="c" style="left:667.0px;top:543.7px;width:134.0px;height:17.9px;">7-Jan-24</div>
<div class="c" style="left:802.0px;top:543.7px;width:128.0px;height:17.9px;">19</div>
<div class="c" style="left:931.0px;top:543.7px;width:126.0px;height:17.9px;">4,395</div>
<div class="c" style="left:1185.0px;top:543.7px;width:85.0px;height:17.9px;">Jan</div>
<div class="c" style="left:39.0px;top:561.6px;width:106.0px;height:17.9px;">CUST0143</div>
<div class="c" style="left:146.0px;top:561.6px;width:117.0px;height:17.9px;">Healthcare</div>
<div class="c" style="left:264.0px;top:561.6px;width:130.0px;height:17.9px;">Cold Call</div>
<div class="c" style="left:395.0px;top:561.6px;width:84.0px;height:17.9px;">Closed Lost</div>
<div class="c" style="left:480.0px;top:561.6px;width:84.0px;height:17.9px;">Closed</div>
<div class="c" style="left:565.0px;top:561.6px;width:101.0px;height:17.9px;">Alice</div>
<div class="c" style="left:667.0px;top:561.6px;width:134.0px;height:17.9px;">12-Jan-24</div>
<div class="c" style="left:802.0px;top:561.6px;width:128.0px;height:17.9px;">3</div>
<div class="c" style="left:931.0px;top:561.6px;width:126.0px;height:17.9px;">4,732</div>
<div class="c" style="left:1185.0px;top:561.6px;width:85.0px;height:17.9px;">Jan</div>
<div class="c" style="left:39.0px;top:579.5px;width:106.0px;height:17.9px;">CUST0148</div>
<div class="c" style="left:146.0px;top:579.5px;width:117.0px;height:17.9px;">Retail</div>
<div class="c" style="left:264.0px;top:579.5px;width:130.0px;height:17.9px;">Referral</div>
<div class="c" style="left:395.0px;top:579.5px;width:84.0px;height:17.9px;">Closed Lost</div>
<div class="c" style="left:480.0px;top:579.5px;width:84.0px;height:17.9px;">Closed</div>
<div class="c" style="left:565.0px;top:579.5px;width:101.0px;height:17.9px;">Alice</div>
<div class="c" style="left:667.0px;top:579.5px;width:134.0px;height:17.9px;">15-Jan-24</div>
<div class="c" style="left:802.0px;top:579.5px;width:128.0px;height:17.9px;">13</div>
<div class="c" style="left:931.0px;top:579.5px;width:126.0px;height:17.9px;">9,003</div>
<div class="c" style="left:1185.0px;top:579.5px;width:85.0px;height:17.9px;">Jan</div>
<div class="c" style="left:39.0px;top:597.3px;width:106.0px;height:17.9px;">CUST0149</div>
<div class="c" style="left:146.0px;top:597.3px;width:117.0px;height:17.9px;">Retail</div>
<div class="c" style="left:264.0px;top:597.3px;width:130.0px;height:17.9px;">Social Media</div>
<div class="c" style="left:395.0px;top:597.3px;width:84.0px;height:17.9px;">Lead</div>
<div class="c" style="left:480.0px;top:597.3px;width:84.0px;height:17.9px;">Open</div>
<div class="c" style="left:565.0px;top:597.3px;width:101.0px;height:17.9px;">Ethan</div>
<div class="c" style="left:667.0px;top:597.3px;width:134.0px;height:17.9px;">31-Jan-24</div>
<div class="c" style="left:802.0px;top:597.3px;width:128.0px;height:17.9px;">6</div>
<div class="c" style="left:931.0px;top:597.3px;width:126.0px;height:17.9px;">0</div>
<div class="c" style="left:1058.0px;top:597.3px;width:126.0px;height:17.9px;">0%</div>
<div class="c" style="left:1185.0px;top:597.3px;width:85.0px;height:17.9px;">Jan</div>
<div class="c" style="left:39.0px;top:615.2px;width:106.0px;height:17.9px;">CUST0151</div>
<div class="c" style="left:146.0px;top:615.2px;width:117.0px;height:17.9px;">Technology</div>
<div class="c" style="left:264.0px;top:615.2px;width:130.0px;height:17.9px;">Webinar</div>
<div class="c" style="left:395.0px;top:615.2px;width:84.0px;height:17.9px;">Proposal Sent</div>
<div class="c" style="left:480.0px;top:615.2px;width:84.0px;height:17.9px;">Open</div>
<div class="c" style="left:565.0px;top:615.2px;width:101.0px;height:17.9px;">Bob</div>
<div class="c" style="left:667.0px;top:615.2px;width:134.0px;height:17.9px;">11-Jan-24</div>
<div class="c" style="left:802.0px;top:615.2px;width:128.0px;height:17.9px;">42</div>
<div class="c" style="left:931.0px;top:615.2px;width:126.0px;height:17.9px;">1,617</div>
<div class="c" style="left:1058.0px;top:615.2px;width:126.0px;height:17.9px;">41%</div>
<div class="c" style="left:1185.0px;top:615.2px;width:85.0px;height:17.9px;">Jan</div>
<div class="botline" style="left:0.0px;top:636.0px;width:1280.0px;height:2.0px;"></div>
</body></html>
